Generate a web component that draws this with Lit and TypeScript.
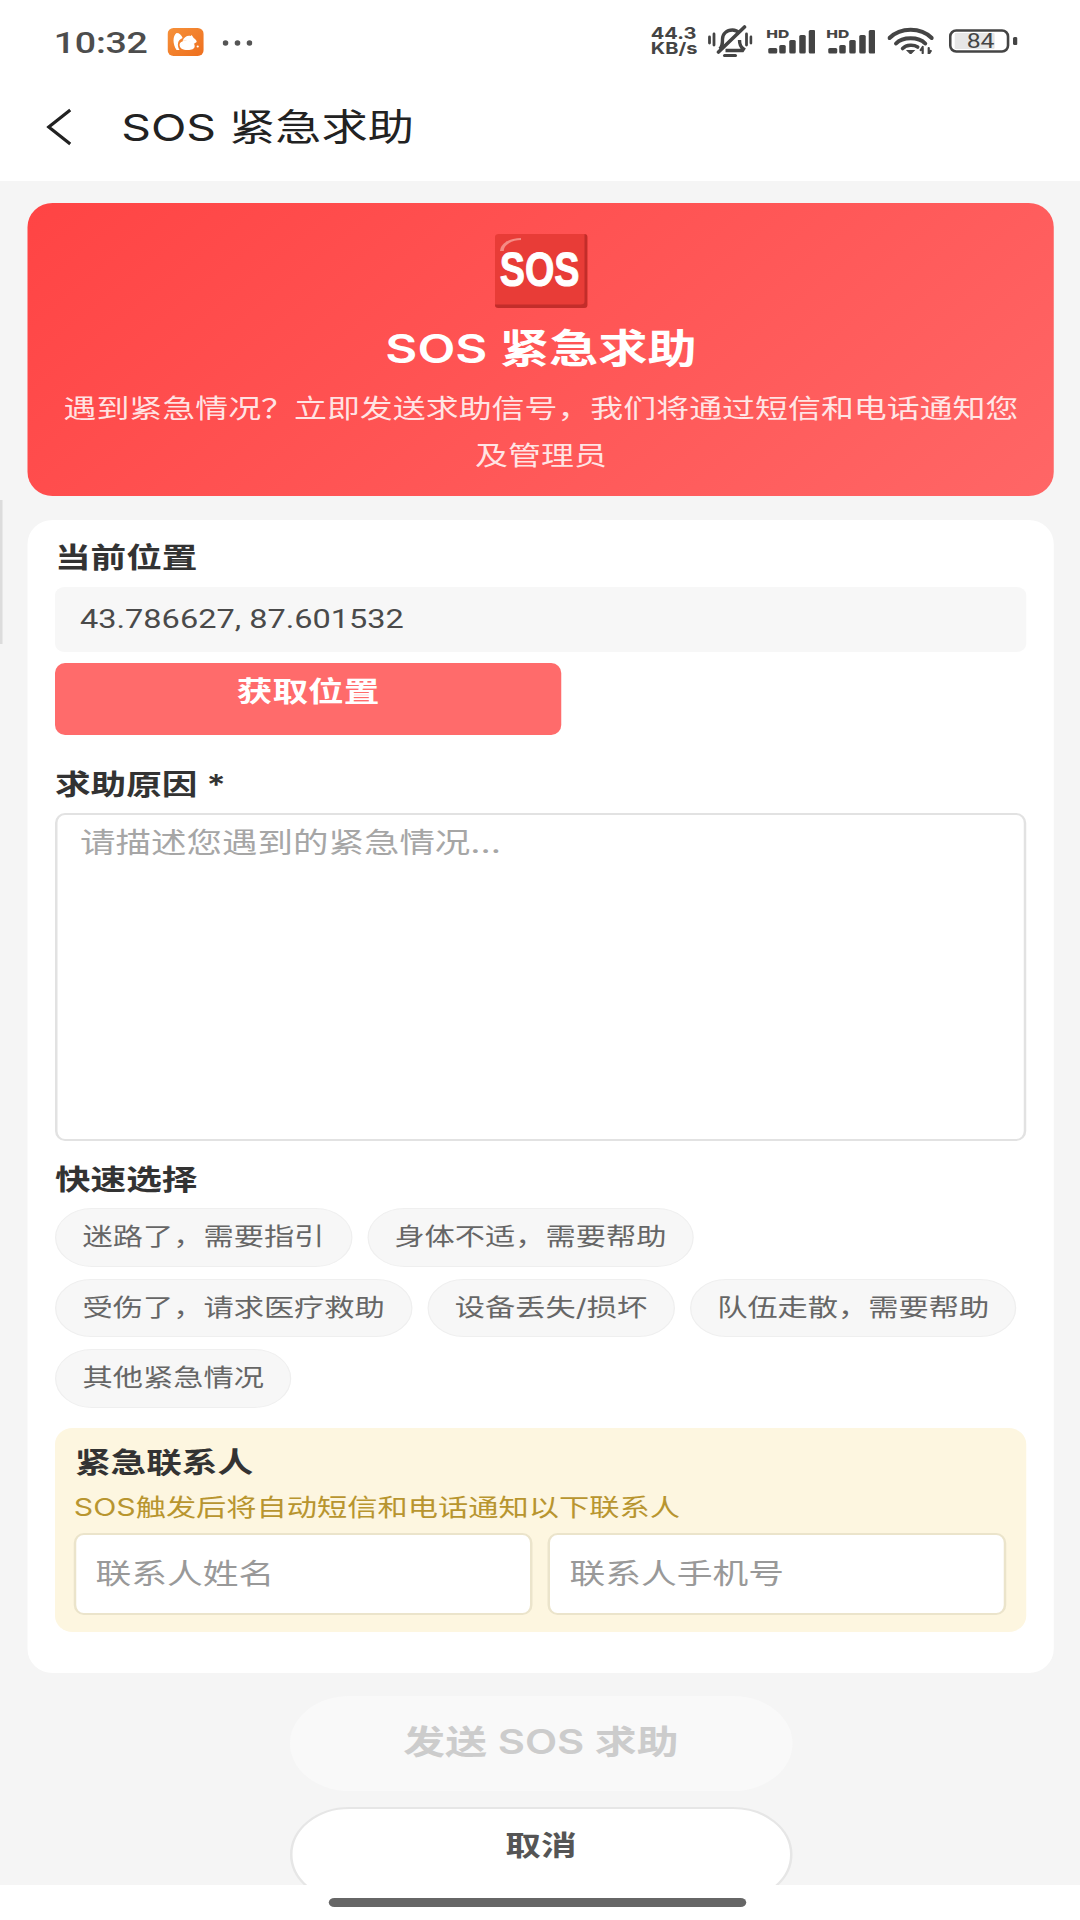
import { LitElement, html, css, svg } from "lit";
import { customElement } from "lit/decorators.js";

const signal = svg`
  <text x="0" y="10" font-family="Inter, Liberation Sans, sans-serif" font-size="11" font-weight="800" fill="#444" textLength="23" lengthAdjust="spacingAndGlyphs">HD</text>
  <rect x="2" y="20" width="9" height="5.5" rx="1.5" fill="#444"/>
  <rect x="13" y="17" width="6.5" height="8.5" rx="1.5" fill="#444"/>
  <rect x="23" y="12" width="6.5" height="13.5" rx="1.5" fill="#444"/>
  <rect x="33" y="7" width="6.5" height="18.5" rx="1.5" fill="#444"/>
  <rect x="42.5" y="2" width="6.5" height="23.5" rx="1.5" fill="#444"/>`;

@customElement("app-root")
export class AppRoot extends LitElement {
  static styles = css`
    :host {
      display: block;
      width: 864px;
      height: 1920px;
      transform: scaleX(1.25);
      transform-origin: 0 0;
      position: relative;
      overflow: hidden;
      font-family: Inter, "Noto Sans CJK SC", sans-serif;
      color: #333;
      background: #f5f5f5;
    }
    .page { display: flex; flex-direction: column; height: 1920px; }
    .edge { position: absolute; left: 0; top: 500px; width: 1.5px; height: 144px; background: #dcdcdc; }

    .status { height: 75px; background: #fff; display: flex; align-items: center; flex: none; padding: 10px 0 0 43px; box-sizing: border-box; color: #444; }
    .time { font-size: 30px; font-weight: 500; line-height: 36px; width: 90.5px; letter-spacing: -0.2px; color: #4d4d4d; font-family: Roboto, sans-serif; }
    .app { width: 29px; height: 28px; flex: none; position: relative; top: -1px; }
    .dots { width: 24px; height: 6px; margin-left: 15px; flex: none; }
    .status-right { margin-left: auto; display: flex; align-items: center; padding-right: 50px; position: relative; top: -2px; }
    .status-right svg { display: block; flex: none; }
    .speed { width: 38px; font-size: 16px; line-height: 15px; font-weight: 700; color: #444; text-align: left; }
    .speed span { display: block; white-space: nowrap; height: 15px; }
    .bell { width: 36px; height: 32px; margin-left: 7px; }
    .sig { width: 39.2px; height: 26px; }
    .sig.a { margin-left: 11px; }
    .sig.b { margin-left: 9px; }
    .wifi { width: 37px; height: 27px; margin-left: 10px; }
    .batt { width: 55px; height: 24px; margin-left: 12px; }

    .header { height: 106px; background: #fff; flex: none; display: flex; align-items: center; box-sizing: border-box; padding: 0 0 0 37px; }
    .back { width: 20px; height: 38px; flex: none; position: relative; top: -1px; }
    .header h1 { margin: 0 0 0 40px; font-size: 37px; line-height: 44px; font-weight: 400; color: #222; white-space: nowrap; position: relative; }

    main { flex: 1; min-height: 0; overflow: hidden; padding: 22px 20.8px 0 22.4px; }

    .banner { height: 293px; box-sizing: border-box; padding: 31px 24px 0; border-radius: 20px 20px 20px 20px / 24px; background: linear-gradient(135deg, #ff4444, #ff6666); text-align: center; color: #fff; }
    .emoji { width: 74.4px; height: 74px; margin: 0 auto; position: relative; display: flex; align-items: center; justify-content: center; overflow: hidden; box-sizing: border-box; padding-bottom: 3px; background: #e83c37; border-radius: 3px; box-shadow: inset -2.4px -3.5px 0 #c22d2a; }
    .emoji::before { content: ""; position: absolute; left: 4.5px; top: 3.5px; width: 17px; height: 13px; box-sizing: border-box; border-left: 3px solid #f58b84; border-top: 2px solid #f58b84; border-radius: 100% 0 0 0; }
    .emoji span { flex: none; margin-left: -2px; font: 700 48px/48px "Liberation Sans", sans-serif; color: #fff; -webkit-text-stroke: 1px #fff; transform: scaleX(0.63); position: relative; }
    .banner h2 { margin: 19px 0 0; font-size: 39.4px; line-height: 44px; font-weight: 600; }
    .banner p { margin: 14px 0 0; font-size: 26.35px; line-height: 46.5px; color: rgba(255, 255, 255, 0.85); }

    .card { margin-top: 24px; background: #fff; border-radius: 20px 20px 20px 20px / 24px; padding: 18px 22.4px 41px 21.6px; }
    .label { font-size: 28.5px; line-height: 40px; font-weight: 600; color: #333; }
    .label.reason { margin-top: 30px; }
    .label.quick { margin-top: 19px; }
    .position { margin-top: 9px; height: 65px; box-sizing: border-box; background: #f7f7f7; border-radius: 8px; display: flex; align-items: center; padding: 0 20px 2px; font-size: 26px; color: #4a4a4a; font-family: Roboto, sans-serif; }
    .locate { display: flex; justify-content: center; margin-top: 11px; width: 405px; height: 72px; box-sizing: border-box; padding: 9px 0 0; border: 0; border-radius: 8px / 10px; background: #ff6b6b; color: #fff; font: 600 28.5px/40px Inter, "Noto Sans CJK SC", sans-serif; }
    textarea { display: block; margin-top: 8px; width: 100%; height: 328px; box-sizing: border-box; padding: 8px 18px; border: 2px solid #e2e2e2; border-radius: 8px / 10px; font: 400 28.4px/40px Inter, "Noto Sans CJK SC", sans-serif; resize: none; background: #fff; outline: none; }
    textarea::placeholder { color: #a6a6a6; opacity: 1; }

    .chips { margin-top: 8px; display: flex; flex-wrap: wrap; gap: 12px; }
    .chip { height: 58.6px; box-sizing: border-box; padding: 0 21px; border: 1px solid #efefef; border-radius: 30px; background: #f7f7f7; font-size: 24.2px; line-height: 56px; color: #666; white-space: nowrap; }

    .contact { margin-top: 20px; height: 204px; box-sizing: border-box; padding: 15px 15.5px 0 15px; background: #fdf6e0; border-radius: 14px / 16px; }
    .contact h3 { margin: 0 0 0 1px; font-size: 28.5px; line-height: 40px; font-weight: 600; color: #333; }
    .contact p { margin: 8px 0 0; font-size: 24.2px; line-height: 34px; color: #b8952f; white-space: nowrap; }
    .inputs { display: flex; gap: 11.8px; margin-top: 8px; }
    .inputs input { flex: 1; min-width: 0; height: 82px; box-sizing: border-box; padding: 0 15.5px; border: 2px solid #ebe4cb; border-radius: 8px / 10px; background: #fff; font: 400 28.6px/40px Inter, "Noto Sans CJK SC", sans-serif; outline: none; }
    .inputs input::placeholder { color: #999; opacity: 1; }

    .actions { display: flex; flex-direction: column; align-items: center; }
    .actions button { width: 402.4px; height: 95px; box-sizing: border-box; border-radius: 48px / 48px; font-family: Inter, "Noto Sans CJK SC", sans-serif; display: flex; justify-content: center; }
    .send { margin-top: 23px; border: 0; background: #f9f9f9; color: #ccc; font-size: 33.5px; font-weight: 600; line-height: 44px; padding: 24px 0 0; }
    .cancel { margin-top: 16px; border: 2px solid #e6e6e6; background: #fff; color: #555; font-size: 28.5px; font-weight: 600; line-height: 40px; padding: 17px 0 0; }

    .nav { height: 35px; flex: none; background: #fff; display: flex; justify-content: center; padding-top: 13px; box-sizing: border-box; }
    .pill { width: 334px; height: 9px; border-radius: 5px; background: #666; margin-left: -4px; }
  `;

  render() {
    const chips = ["迷路了，需要指引", "身体不适，需要帮助", "受伤了，请求医疗救助", "设备丢失/损坏", "队伍走散，需要帮助", "其他紧急情况"];
    return html`
      <div class="edge"></div>
      <div class="page">
        <div class="status">
          <span class="time">10:32</span>
          <svg class="app" viewBox="0 0 36 28" preserveAspectRatio="none">
            <defs><linearGradient id="uc" x1="0" y1="0" x2="1" y2="1"><stop offset="0" stop-color="#f6913a"/><stop offset="1" stop-color="#ee6f1e"/></linearGradient></defs>
            <rect width="36" height="28" rx="6" fill="url(#uc)"/>
            <path d="M9 5C5 8 5 16 9 22l3 0C9 17 10 12 15 10 14 7 12 5 9 5z" fill="#fff"/>
            <path d="M12 17c0-3 4-5 8-4 4 0 7 2 7 5 0 3-3 4-7 4-5 0-8-2-8-5z" fill="#fff"/>
            <path d="M15 13c1-4 5-6 8-5l1-1 2 3c2 1 3 3 3 4l-3 2c-3-3-8-4-11-3z" fill="#fff"/>
            <circle cx="30" cy="18.5" r="1.1" fill="#fff"/>
          </svg>
          <svg class="dots" viewBox="0 0 30 6" preserveAspectRatio="none">
            <circle cx="3" cy="3" r="2.8" fill="#555"/><circle cx="15" cy="3" r="2.8" fill="#555"/><circle cx="27" cy="3" r="2.8" fill="#555"/>
          </svg>
          <div class="status-right">
            <div class="speed"><span>44.3</span><span>KB/s</span></div>
            <svg class="bell" viewBox="0 0 45 32" preserveAspectRatio="none" fill="none" stroke="#444">
              <path d="M2 12v6M6.5 9v11M39 9v11M43.5 12v6" stroke-width="2.8" stroke-linecap="round"/>
              <path d="M12 24c3-2 3-5 3-10 0-5 4-9 10-9 3 0 5 1 7 3" stroke-width="3.4"/>
              <path d="M32 15c0 4 1 7 4 9l-1 1.5H18" stroke-width="3.4"/>
              <path d="M17 30.5h11" stroke-width="3" stroke-linecap="round"/>
              <path d="M11 27L37 2" stroke-width="3.6" stroke-linecap="round"/>
            </svg>
            <svg class="sig a" viewBox="0 0 49 26" preserveAspectRatio="none">${signal}</svg>
            <svg class="sig b" viewBox="0 0 49 26" preserveAspectRatio="none">${signal}</svg>
            <svg class="wifi" viewBox="0 0 46 27" preserveAspectRatio="none" fill="none" stroke="#444" stroke-linecap="round">
              <path d="M2 11C13 0 33 0 44 11" stroke-width="4"/>
              <path d="M8.5 16.5C15 9.5 31 9.5 37.5 16.5" stroke-width="4"/>
              <path d="M15 21.5C19 17.5 26 17.5 30 20" stroke-width="3.6"/>
              <path d="M19.5 23.5h7l-3.5 3.5z" fill="#444" stroke="#444" stroke-width="1"/>
              <path d="M35 21v5M35 20l-2 3M41 21v6M41 27l2-3" stroke-width="2.2"/>
            </svg>
            <svg class="batt" viewBox="0 0 69 24" preserveAspectRatio="none">
              <rect x="1.5" y="1.5" width="58" height="21" rx="6" fill="#fff" stroke="#444" stroke-width="2.6"/>
              <rect x="6" y="4" width="40" height="16" rx="1" fill="#e6e6e6"/>
              <text x="32" y="19" text-anchor="middle" font-family="Roboto, sans-serif" font-size="20" fill="#444" textLength="28" lengthAdjust="spacingAndGlyphs">84</text>
              <rect x="64.5" y="8" width="4.5" height="8" rx="1.5" fill="#444"/>
            </svg>
          </div>
        </div>
        <header class="header">
          <svg class="back" viewBox="0 0 25 38" preserveAspectRatio="none" fill="none" stroke="#222" stroke-width="3.2"><path d="M24 2L2.5 19 24 36" /></svg>
          <h1>SOS 紧急求助</h1>
        </header>
        <main>
          <section class="banner">
            <div class="emoji"><span>SOS</span></div>
            <h2>SOS 紧急求助</h2>
            <p>遇到紧急情况？立即发送求助信号，我们将通过短信和电话通知您及管理员</p>
          </section>
          <section class="card">
            <div class="label">当前位置</div>
            <div class="position">43.786627, 87.601532</div>
            <button class="locate">获取位置</button>
            <div class="label reason">求助原因 *</div>
            <textarea placeholder="请描述您遇到的紧急情况..."></textarea>
            <div class="label quick">快速选择</div>
            <div class="chips">${chips.map((c) => html`<span class="chip">${c}</span>`)}</div>
            <div class="contact">
              <h3>紧急联系人</h3>
              <p>SOS触发后将自动短信和电话通知以下联系人</p>
              <div class="inputs">
                <input placeholder="联系人姓名" />
                <input placeholder="联系人手机号" />
              </div>
            </div>
          </section>
          <div class="actions">
            <button class="send">发送 SOS 求助</button>
            <button class="cancel">取消</button>
          </div>
        </main>
        <div class="nav"><div class="pill"></div></div>
      </div>
    `;
  }
}
